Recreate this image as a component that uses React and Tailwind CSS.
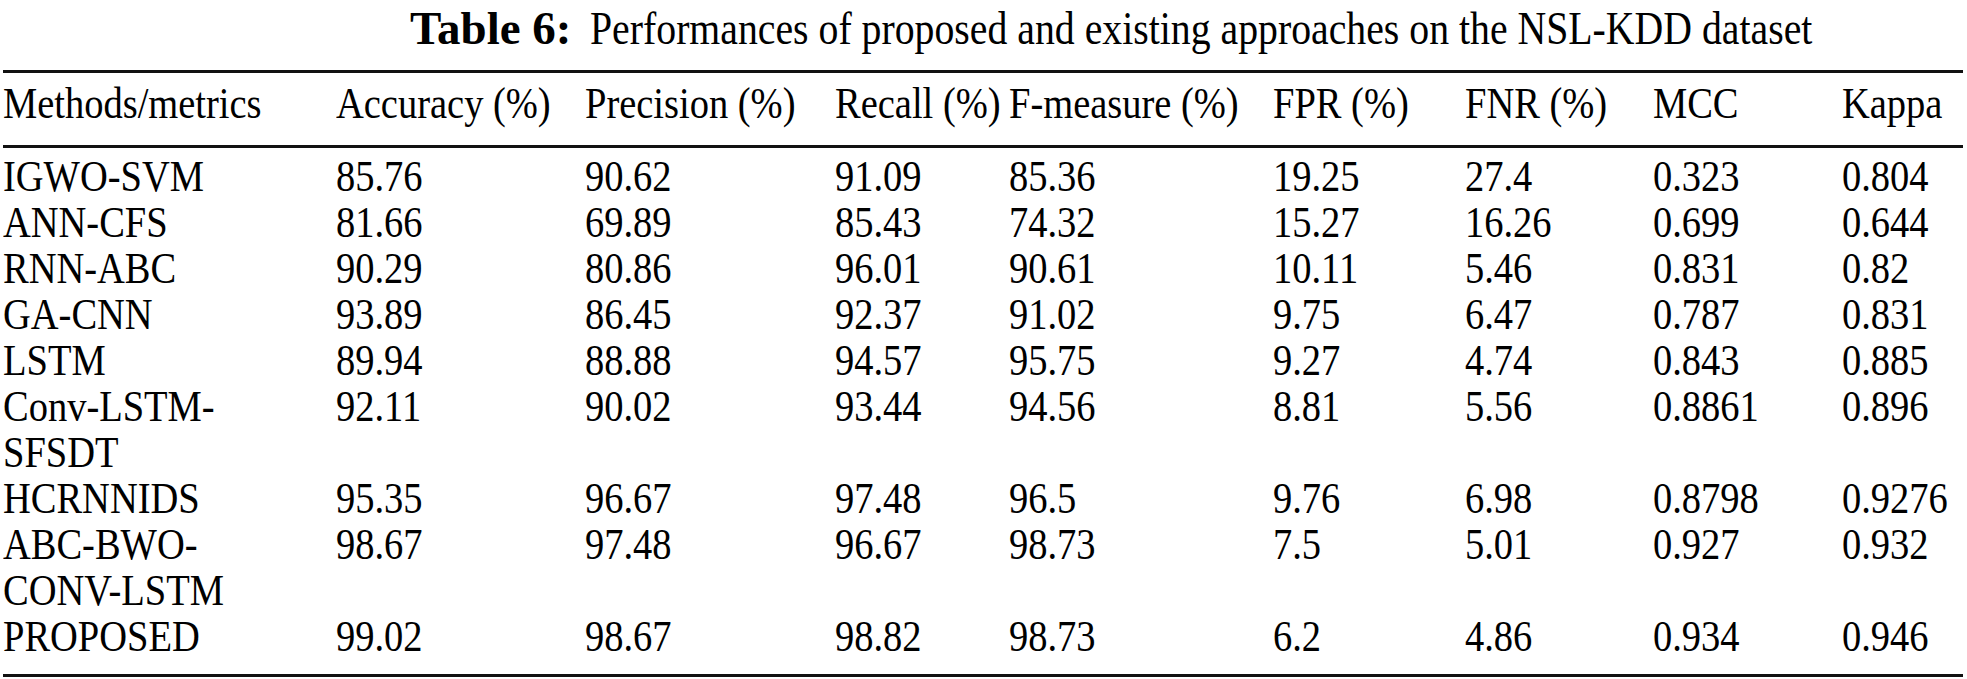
import React from "react";

const headers = [
  "Methods/metrics",
  "Accuracy (%)",
  "Precision (%)",
  "Recall (%)",
  "F-measure (%)",
  "FPR (%)",
  "FNR (%)",
  "MCC",
  "Kappa",
];

const rows = [
  [["IGWO-SVM"], "85.76", "90.62", "91.09", "85.36", "19.25", "27.4", "0.323", "0.804"],
  [["ANN-CFS"], "81.66", "69.89", "85.43", "74.32", "15.27", "16.26", "0.699", "0.644"],
  [["RNN-ABC"], "90.29", "80.86", "96.01", "90.61", "10.11", "5.46", "0.831", "0.82"],
  [["GA-CNN"], "93.89", "86.45", "92.37", "91.02", "9.75", "6.47", "0.787", "0.831"],
  [["LSTM"], "89.94", "88.88", "94.57", "95.75", "9.27", "4.74", "0.843", "0.885"],
  [["Conv-LSTM-", "SFSDT"], "92.11", "90.02", "93.44", "94.56", "8.81", "5.56", "0.8861", "0.896"],
  [["HCRNNIDS"], "95.35", "96.67", "97.48", "96.5", "9.76", "6.98", "0.8798", "0.9276"],
  [["ABC-BWO-", "CONV-LSTM"], "98.67", "97.48", "96.67", "98.73", "7.5", "5.01", "0.927", "0.932"],
  [["PROPOSED"], "99.02", "98.67", "98.82", "98.73", "6.2", "4.86", "0.934", "0.946"],
];

const grid =
  "grid grid-cols-[333px_249px_250px_174px_264px_192px_188px_189px_1fr]";

function T({ children }) {
  return (
    <span className="block whitespace-nowrap origin-left scale-x-[0.855]">
      {children}
    </span>
  );
}

export default function App() {
  return (
    <div
      className="w-[1967px] h-[679px] bg-white text-black overflow-hidden"
      style={{ fontFamily: '"Liberation Serif", "Times New Roman", serif' }}
    >
      <div className="pl-[410px] text-[47px] leading-[56px] whitespace-nowrap flex">
        <span className="font-bold">Table 6:</span>
        <span className="ml-[18px] inline-block origin-left scale-x-[0.846]">
          Performances of proposed and existing approaches on the NSL-KDD dataset
        </span>
      </div>
      <div className="ml-[3px] w-[1960px] mt-[14px] border-t-[3px] border-b-[3px] border-[#111]">
        <div className={`${grid} text-[45px] leading-[46px] pt-[7px] pb-[19px] border-b-[3px] border-[#111]`}>
          {headers.map((h) => (
            <div key={h}>
              <T>{h}</T>
            </div>
          ))}
        </div>
        <div className={`${grid} text-[45px] leading-[46px] pt-[5px] pb-[15px]`}>
          {rows.map((r) =>
            r.map((c, i) => (
              <div key={r[0][0] + i}>
                {i === 0 ? c.map((line) => <T key={line}>{line}</T>) : <T>{c}</T>}
              </div>
            ))
          )}
        </div>
      </div>
    </div>
  );
}
